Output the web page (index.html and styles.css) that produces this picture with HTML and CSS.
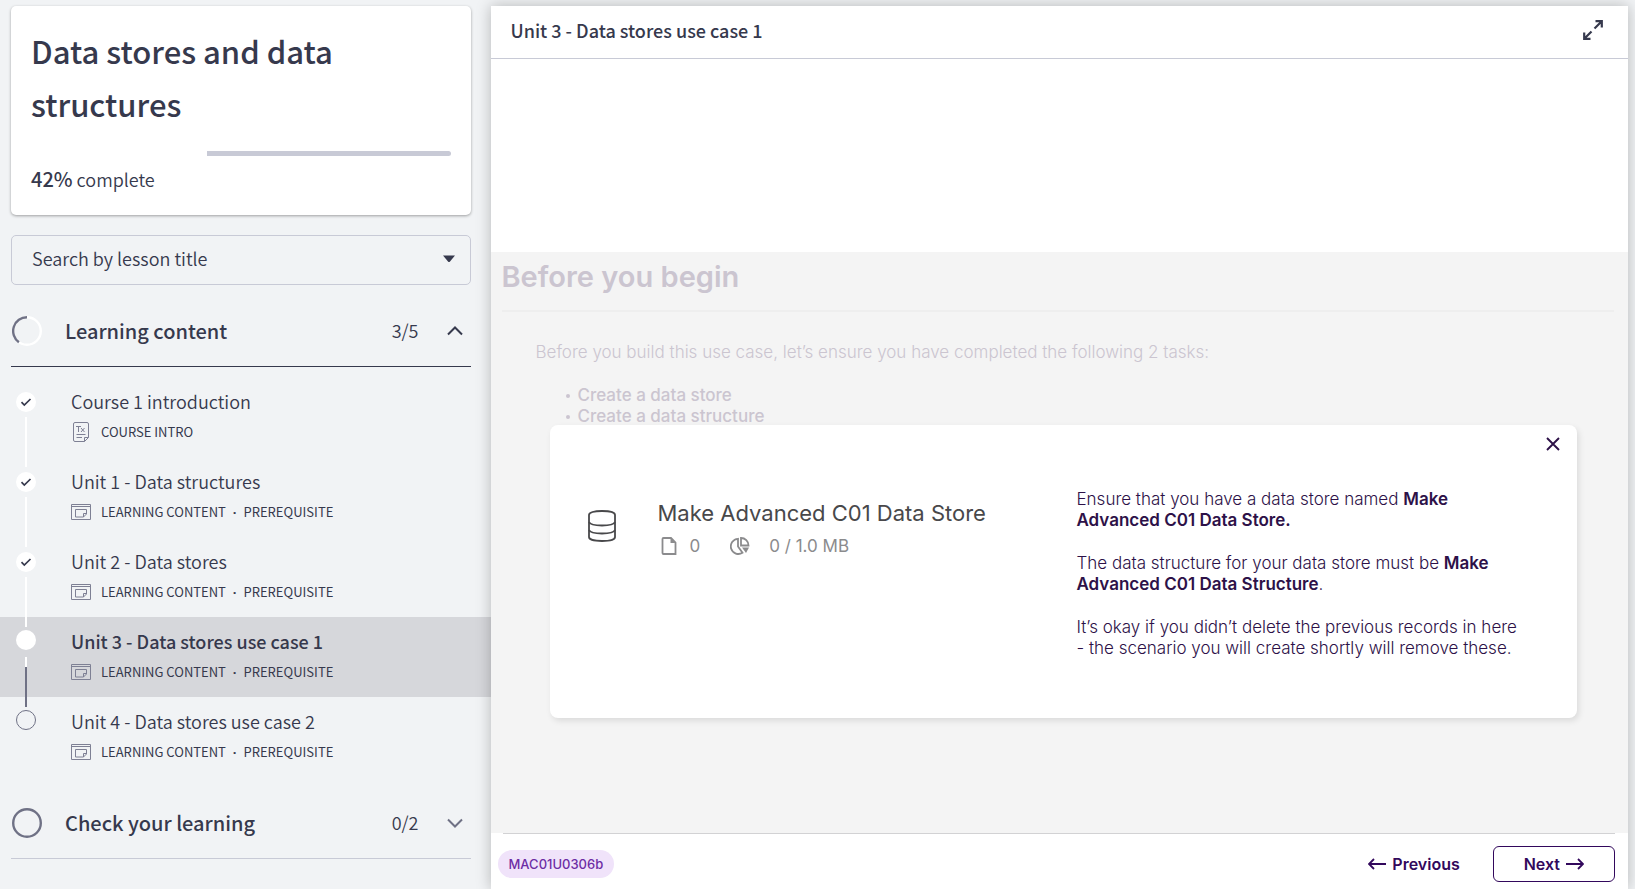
FILE: index.html
```html
<!DOCTYPE html>
<html lang="en">
<head>
<meta charset="utf-8">
<title>Data stores and data structures</title>
<link rel="stylesheet" href="styles.css">
</head>
<body>
<svg class="defs" aria-hidden="true">
  <symbol id="ic-check" viewBox="0 0 20 20"><path d="M5.5 10.2l2.8 2.8 6.2-6" fill="none" stroke="currentColor" stroke-width="1.7"/></symbol>
  <symbol id="ic-page" viewBox="0 0 20 20"><g fill="none" stroke="currentColor"><path d="M.5 2.5h19v15H.5zM.5 4.5h19"/><path d="M4.5 7.500h11v4.500l-3 3h-8zM15.500 11.500h-3v3.500"/></g></symbol>
</svg>
<aside class="sidebar">
  <section class="course">
    <h1 class="course-title">Data stores and data structures</h1>
    <div class="progress"><div class="progress-done" style="width:42%"></div></div>
    <p class="course-status"><strong>42%</strong> complete</p>
  </section>
  <div class="search">
    <select class="search-select" aria-label="Search by lesson title"><option>Search by lesson title</option></select>
    <svg class="search-arrow" width="12" height="8" viewBox="0 0 12 8" aria-hidden="true"><path d="M0 .5h12L7 6.500q-1 1-2 0z" fill="currentColor"/></svg>
  </div>
  <button class="section section-open">
    <svg class="ring" width="30" height="30" viewBox="0 0 30 30" aria-hidden="true"><circle cx="15" cy="15" r="13.800" fill="none" stroke="#fff" stroke-width="2.400"/><path d="M15 1.200A13.800 13.800 0 0 0 6.900 26.200" fill="none" stroke="#6f7185" stroke-width="2.400"/></svg>
    <span class="section-title">Learning content</span>
    <span class="section-count">3/5</span>
    <svg class="chevron" width="16" height="10" viewBox="0 0 16 10" aria-hidden="true"><path d="M1 8.500l7-7 7 7" fill="none" stroke="currentColor" stroke-width="2"/></svg>
  </button>
  <ol class="lessons">
    <li class="lesson">
      <div class="rail"><svg class="dot dot-done" viewBox="0 0 20 20" aria-hidden="true"><use href="#ic-check"/></svg></div>
      <a class="lesson-link" href="#intro"><span class="lesson-title">Course 1 introduction</span>
      <span class="meta"><svg class="meta-icon" viewBox="0 0 20 20" aria-hidden="true"><g fill="none" stroke="currentColor"><path d="M4 .5h12q1.500 0 1.500 1.500v13.500l-4 4H4q-1.500 0-1.500-1.500V2Q2.500.5 4 .5zM17.500 15.500h-4v4"/><path d="M5.500 12.500h9M5.500 15.500h5.500M5 4.500h5M7.500 4.500v5.500M10 6l3.500 4M13.500 6l-3.500 4"/></g></svg>COURSE INTRO</span></a>
    </li>
    <li class="lesson">
      <div class="rail"><svg class="dot dot-done" viewBox="0 0 20 20" aria-hidden="true"><use href="#ic-check"/></svg></div>
      <a class="lesson-link" href="#unit1"><span class="lesson-title">Unit 1 - Data structures</span>
      <span class="meta"><svg class="meta-icon" aria-hidden="true"><use href="#ic-page"/></svg><span>LEARNING CONTENT <span class="sep">·</span> PREREQUISITE</span></span></a>
    </li>
    <li class="lesson">
      <div class="rail"><svg class="dot dot-done" viewBox="0 0 20 20" aria-hidden="true"><use href="#ic-check"/></svg></div>
      <a class="lesson-link" href="#unit2"><span class="lesson-title">Unit 2 - Data stores</span>
      <span class="meta"><svg class="meta-icon" aria-hidden="true"><use href="#ic-page"/></svg><span>LEARNING CONTENT <span class="sep">·</span> PREREQUISITE</span></span></a>
    </li>
    <li class="lesson lesson-current">
      <div class="rail"><span class="dot dot-done"></span></div>
      <a class="lesson-link" href="#unit3" aria-current="page"><span class="lesson-title">Unit 3 - Data stores use case 1</span>
      <span class="meta"><svg class="meta-icon" aria-hidden="true"><use href="#ic-page"/></svg><span>LEARNING CONTENT <span class="sep">·</span> PREREQUISITE</span></span></a>
    </li>
    <li class="lesson lesson-last">
      <div class="rail"><span class="dot dot-todo"></span></div>
      <a class="lesson-link" href="#unit4"><span class="lesson-title">Unit 4 - Data stores use case 2</span>
      <span class="meta"><svg class="meta-icon" aria-hidden="true"><use href="#ic-page"/></svg><span>LEARNING CONTENT <span class="sep">·</span> PREREQUISITE</span></span></a>
    </li>
  </ol>
  <button class="section">
    <svg class="ring" width="30" height="30" viewBox="0 0 30 30" aria-hidden="true"><circle cx="15" cy="15" r="13.800" fill="none" stroke="#6f7185" stroke-width="2.400"/></svg>
    <span class="section-title">Check your learning</span>
    <span class="section-count">0/2</span>
    <svg class="chevron chevron-down" width="16" height="10" viewBox="0 0 16 10" aria-hidden="true"><path d="M1 1.500l7 7 7-7" fill="none" stroke="currentColor" stroke-width="2"/></svg>
  </button>
</aside>
<main class="viewer">
  <header class="viewer-head">
    <h2 class="viewer-title">Unit 3 - Data stores use case 1</h2>
    <button class="icon-button" aria-label="Full screen"><svg width="20" height="20" viewBox="0 0 20 20" aria-hidden="true"><g fill="none" stroke="currentColor" stroke-width="2.200"><path d="M11.500 8.500L18 2M12.500 1.200H18.800V7.500M8.500 11.500L2 18M1.200 12.500V18.800H7.500"/></g></svg></button>
  </header>
  <article class="stage">
    <h3 class="stage-title">Before you begin</h3>
    <div class="brief">
      <p>Before you build this use case, let’s ensure you have completed the following 2 tasks:</p>
      <ul class="tasks"><li>Create a data store</li><li>Create a data structure</li></ul>
    </div>
    <section class="card">
      <button class="icon-button card-close" aria-label="Close"><svg width="14" height="14" viewBox="0 0 14 14" aria-hidden="true"><path d="M1 1l12 12M13 1L1 13" stroke="currentColor" stroke-width="1.900"/></svg></button>
      <div class="store">
        <svg class="store-icon" width="28" height="32" viewBox="0 0 28 32" aria-hidden="true"><g fill="none" stroke="currentColor" stroke-width="1.800"><path d="M1 5C1 2.500 6 1 14 1s13 1.500 13 4v22c0 2.500-5 4-13 4S1 29.500 1 27z"/><path d="M1 12c1 2.500 6 3.500 13 3.500s12-1 13-3.500M1 20c1 2.500 6 3.500 13 3.500s12-1 13-3.500"/></g></svg>
        <div>
          <h4 class="store-name">Make Advanced C01 Data Store</h4>
          <div class="store-stats">
            <svg width="16" height="18" viewBox="0 0 16 18" aria-hidden="true"><path d="M2.500 1H10l4.500 4.500V17H2.500q-1 0-1-1V2q0-1 1-1z" fill="none" stroke="currentColor" stroke-width="1.800"/><path d="M9.500 1v5h5z" fill="currentColor"/></svg>
            <span class="store-count">0</span>
            <svg width="20" height="18" viewBox="0 0 20 18" aria-hidden="true"><g fill="none" stroke="currentColor" stroke-width="1.800"><path d="M8 1.800A7.600 7.600 0 1 0 12.500 15.800L8 9.500z"/><path d="M11 1v7.500h7.500A7.500 7.500 0 0 0 11 1z"/></g><path d="M12 10.500h7l-3 5.500z" fill="currentColor"/></svg>
            <span class="store-size">0 / 1.0 MB</span>
          </div>
        </div>
      </div>
      <div class="notes">
        <p>Ensure that you have a data store named <strong>Make Advanced C01 Data Store.</strong></p>
        <p>The data structure for your data store must be <strong>Make Advanced C01 Data Structure</strong>.</p>
        <p>It’s okay if you didn’t delete the previous records in here - the scenario you will create shortly will remove these.</p>
      </div>
    </section>
  </article>
  <footer class="viewer-foot">
    <span class="code">MAC01U0306b</span>
    <button class="nav-button"><svg width="18" height="12" viewBox="0 0 18 12" aria-hidden="true"><path d="M18 6H1M6 1L1 6l5 5" fill="none" stroke="currentColor" stroke-width="1.800"/></svg>Previous</button>
    <button class="nav-button nav-next">Next<svg width="18" height="12" viewBox="0 0 18 12" aria-hidden="true"><path d="M0 6h17M12 1l5 5-5 5" fill="none" stroke="currentColor" stroke-width="1.800"/></svg></button>
  </footer>
</main>
</body>
</html>
```
FILE: styles.css
```css
* { box-sizing: border-box; margin: 0; padding: 0; }
body {
  display: flex;
  min-height: 100vh;
  padding-top: 6px;
  background: #f1f3f5;
  color: #36394d;
  font-family: "Noto Sans CJK SC", "Open Sans", sans-serif;
  font-size: 18px;
  font-weight: 350;
}
button { font: inherit; color: inherit; background: none; border: 0; cursor: pointer; }
a { color: inherit; text-decoration: none; }
.defs { position: absolute; width: 0; height: 0; }

.sidebar { flex: 0 0 30%; max-width: 491px; }
.course {
  margin: 0 20px 20px 11px;
  padding: 18px 20px 22px;
  background: #fff;
  border-radius: 5px;
  box-shadow: 0 1px 3px rgba(0, 0, 0, .35);
}
.course-title { font-size: 31px; line-height: 53px; font-weight: 500; }
.progress { height: 5px; margin: 21px 0 9px; background: #c8cad6; border-radius: 3px; }
.progress-done { height: 5px; background: #fff; }
.course-status { line-height: 28px; }
.course-status strong { font-weight: 500; font-size: 20px; }

.search { position: relative; margin: 0 20px 0 11px; }
.search-select {
  display: block;
  width: 100%;
  height: 50px;
  padding: 0 20px 5px;
  appearance: none;
  background: transparent;
  border: 1px solid #c8cad6;
  border-radius: 5px;
  color: inherit;
  font: inherit;
}
.search-arrow { position: absolute; right: 16px; top: 20px; pointer-events: none; }

.section {
  display: flex;
  align-items: center;
  width: calc(100% - 31px);
  height: 72px;
  margin-left: 11px;
  padding: 0 8px 0 1px;
  border-bottom: 1px solid #c8cad6;
  text-align: left;
}
.section-open { height: 82px; padding-top: 10px; border-color: #36394d; }
.section-title { flex: 1; margin-left: 23px; font-size: 20px; font-weight: 500; }
.section-count { margin-right: 28px; line-height: 24px; padding-bottom: 2px; }
.chevron-down { color: #6f7185; }

.lessons { list-style: none; padding: 10px 0; }
.lesson { display: flex; height: 80px; }
.rail { position: relative; flex: 0 0 71px; padding: 15px 0 0 16px; }
.rail::after {
  content: "";
  position: absolute;
  left: 25px;
  top: 40px;
  width: 2px;
  height: 50px;
  background: #fff;
}
.dot { display: block; width: 20px; height: 20px; border-radius: 50%; }
.dot-done { background: #fff; }
.dot-todo { border: 1px solid #6f7185; }
.lesson-current { background: #d6d7db; }
.lesson-current .rail, .lesson-last .rail { padding-top: 13px; }
.lesson-current .rail::after { background: linear-gradient(#fff 10px, #6f7185 10px); }
.lesson-last .rail::after { display: none; }
.lesson-link { display: block; padding-top: 10px; }
.lesson-title { display: block; line-height: 28px; }
.lesson-current .lesson-title { font-weight: 500; }
.meta { display: flex; align-items: center; gap: 10px; margin-top: 5px; font-size: 13px; line-height: 24px; font-weight: 400; }
.meta-icon { width: 20px; height: 20px; color: #7e8094; }
.sep { padding: 0 4px; font-family: "Open Sans", sans-serif; font-weight: 700; line-height: 16px; }

.viewer {
  display: flex;
  flex-direction: column;
  flex: 1;
  margin-right: 7px;
  background: #fff;
  box-shadow: 0 0 14px rgba(0, 0, 0, .25);
}
.viewer-head {
  display: flex;
  justify-content: space-between;
  align-items: center;
  height: 53px;
  padding: 0 25px 4px 20px;
  border-bottom: 1px solid #c8cad6;
}
.viewer-title { font-size: 18px; font-weight: 500; }
.icon-button { display: flex; }

.stage {
  flex: 1;
  margin-top: 193px;
  padding-bottom: 110px;
  background: #f4f4f4;
  color: #cbc5d0;
  font-family: Inter, "Liberation Sans", sans-serif;
  font-size: 17px;
  line-height: 21px;
}
.stage-title {
  margin: 0 14px 0 11px;
  padding: 10px 0 18px;
  border-bottom: 2px solid #eee;
  font-size: 29px;
  line-height: 30px;
  font-weight: 600;
}
.brief { padding: 30px 45px 0; font-weight: 300; }
.tasks { list-style: none; margin-top: 22px; padding-left: 26px; font-weight: 500; }
.tasks li { display: flex; align-items: center; gap: 8px; }
.tasks li::before { content: ""; width: 4px; height: 4px; margin-left: 4px; border-radius: 50%; background: currentColor; }
.card {
  position: relative;
  display: grid;
  grid-template-columns: 489px minmax(0, 447px);
  margin: -2px 51px 0 59px;
  padding: 64px 42px 59px 38px;
  background: #fff;
  border-radius: 8px;
  box-shadow: 2px 3px 6px rgba(0, 0, 0, .1);
  color: #2d1148;
}
.card-close { position: absolute; right: 17px; top: 12px; }
.store { display: flex; align-items: flex-start; gap: 42px; color: #48484a; }
.store-icon { margin-top: 21px; }
.store-name { margin-top: 9px; font-size: 22px; line-height: 30px; font-weight: 400; }
.store-stats { display: flex; align-items: center; margin: 8px 0 0 3px; line-height: 20px; font-weight: 400; color: #8b8b8d; }
.store-count { margin: 0 30px 0 13px; }
.store-size { margin-left: 19px; }
.notes { font-weight: 300; }
.notes p + p { margin-top: 22px; }
.notes strong { font-weight: 600; }

.viewer-foot {
  display: flex;
  align-items: center;
  height: 56px;
  margin: 0 13px 0 12px;
  border-top: 1px solid #d2d2d4;
  color: #32085c;
  font-family: Inter, "Liberation Sans", sans-serif;
  font-size: 16px;
  font-weight: 600;
}
.code {
  margin: 4px auto 0 -5px;
  padding: 0 11px;
  line-height: 28px;
  border-radius: 14px;
  background: #f0e3fa;
  color: #6d2da5;
  font-size: 13px;
  font-weight: 500;
}
.nav-button { display: flex; align-items: center; gap: 6px; height: 36px; margin-top: 4px; }
.nav-next { margin-left: 33px; padding: 0 30px; border: 1px solid #32085c; border-radius: 6px; }
```
